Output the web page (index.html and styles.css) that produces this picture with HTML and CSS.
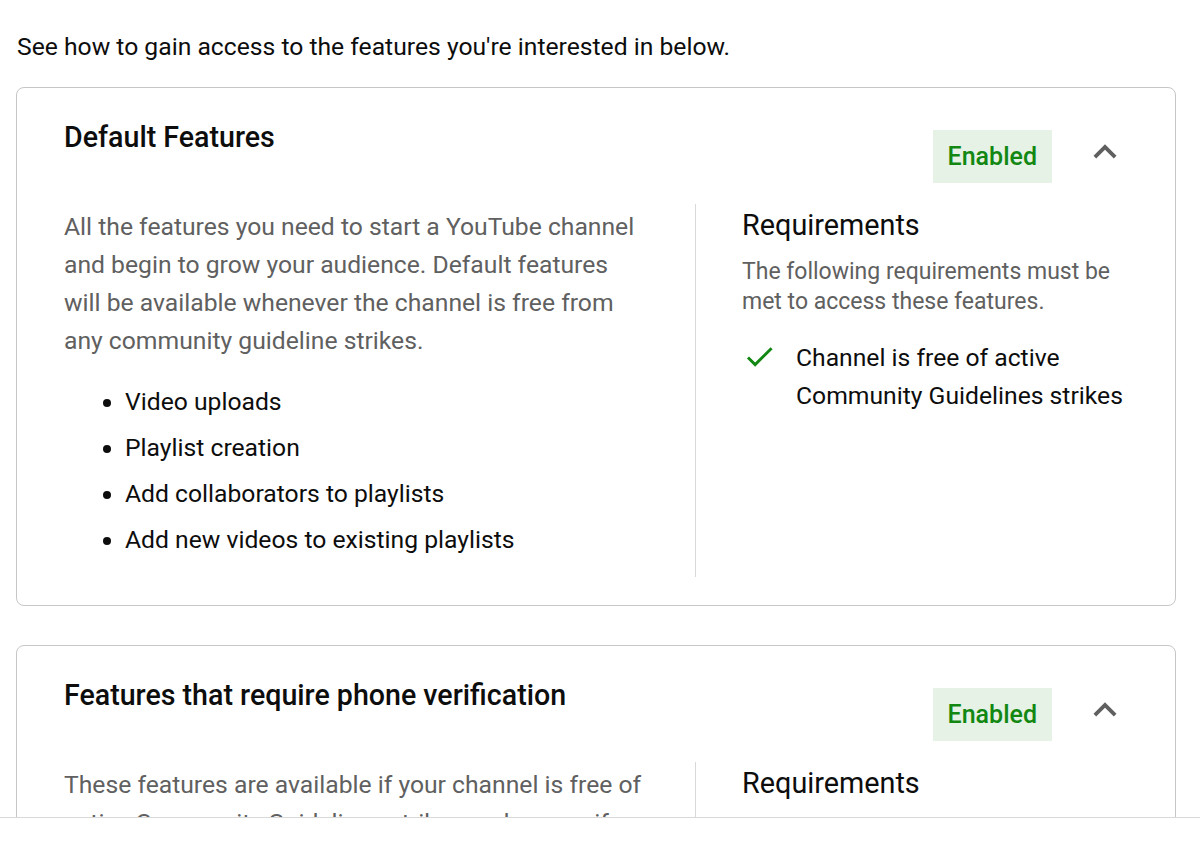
FILE: index.html
```html
<!DOCTYPE html>
<html lang="en">
<head>
  <meta charset="UTF-8" />
  <title>Feature eligibility</title>
  <link rel="stylesheet" href="styles.css">
</head>
<body>
  <div class="scroller">
    <p class="intro">See how to gain access to the features you're interested in below.</p>

    <section class="card">
      <div class="card-head">
        <h2>Default Features</h2>
        <div class="status">
          <span class="badge">Enabled</span>
          <button class="toggle" aria-label="Collapse">
            <svg viewBox="0 0 24 24" width="46" height="46"><path d="M12 8l-6 6 1.41 1.41L12 10.83l4.59 4.58L18 14z" fill="#606060"/></svg>
          </button>
        </div>
      </div>
      <div class="card-body">
        <div class="about">
          <p>All the features you need to start a YouTube channel and begin to grow your audience. Default features will be available whenever the channel is free from any community guideline strikes.</p>
          <ul>
            <li>Video uploads</li>
            <li>Playlist creation</li>
            <li>Add collaborators to playlists</li>
            <li>Add new videos to existing playlists</li>
          </ul>
        </div>
        <div class="reqs">
          <h3>Requirements</h3>
          <p class="reqs-note">The following requirements must be met to access these features.</p>
          <div class="req">
            <svg viewBox="0 0 24 24" width="35" height="35"><path d="M9 16.17L4.83 12l-1.42 1.41L9 19 21 7l-1.41-1.41z" fill="#128712"/></svg>
            <span>Channel is free of active Community Guidelines strikes</span>
          </div>
        </div>
      </div>
    </section>

    <section class="card">
      <div class="card-head">
        <h2>Features that require phone verification</h2>
        <div class="status">
          <span class="badge">Enabled</span>
          <button class="toggle" aria-label="Collapse">
            <svg viewBox="0 0 24 24" width="46" height="46"><path d="M12 8l-6 6 1.41 1.41L12 10.83l4.59 4.58L18 14z" fill="#606060"/></svg>
          </button>
        </div>
      </div>
      <div class="card-body">
        <div class="about">
          <p>These features are available if your channel is free of active Community Guidelines strikes and you verify your phone number.</p>
        </div>
        <div class="reqs">
          <h3>Requirements</h3>
          <p class="reqs-note">The following requirements must be met to access these features.</p>
        </div>
      </div>
    </section>
  </div>
</body>
</html>
```

FILE: styles.css
```css
body {
  margin: 0;
  font-family: Roboto, "Noto Sans", sans-serif;
  background-color: #fff;
  color: #0d0d0d;
}

.scroller {
  height: 818px;
  overflow: hidden;
  border-bottom: 1px solid #d9d9d9;
  padding: 0 24px 0 16px;
  box-sizing: border-box;
}

.intro {
  margin: 28px 0 21px 1px;
  font-size: 24.7px;
  line-height: 38px;
  color: #0d0d0d;
}

.card {
  border: 1px solid #c6c6c6;
  border-radius: 8px;
  padding: 31px 47px 28px 47px;
  margin-bottom: 39px;
}

.card-head {
  display: flex;
  justify-content: space-between;
  align-items: flex-start;
}

.card-head h2 {
  margin: 0;
  font-size: 28.6px;
  line-height: 36px;
  font-weight: 500;
}

.status {
  display: flex;
  align-items: center;
  gap: 30px;
  margin-top: 11px;
}

.badge {
  background-color: #e5f2e5;
  color: #128712;
  font-size: 25px;
  font-weight: 500;
  line-height: 53px;
  padding: 0 15px;
}

.toggle {
  background: none;
  border: none;
  padding: 0;
  width: 46px;
  height: 46px;
  display: flex;
  margin-top: -9px;
  cursor: pointer;
}

.card-body {
  display: grid;
  grid-template-columns: 632px 1fr;
  margin-top: 21px;
}

.about {
  border-right: 1px solid #d9d9d9;
  padding-right: 48px;
  padding-bottom: 10px;
}

.about p {
  margin: 4px 0 0;
  font-size: 24.7px;
  line-height: 38px;
  color: #606060;
}

.about ul {
  margin: 23px 0 0;
  padding-left: 61px;
}

.about li {
  font-size: 24.7px;
  line-height: 38px;
  margin-bottom: 8px;
}

.reqs {
  padding-left: 46px;
}

.reqs h3 {
  margin: 3px 0 0;
  font-size: 28.8px;
  line-height: 36px;
  font-weight: 400;
}

.reqs-note {
  margin: 14px 0 0;
  font-size: 23px;
  line-height: 30px;
  color: #606060;
}

.req {
  display: flex;
  align-items: flex-start;
  gap: 19px;
  margin-top: 22px;
  font-size: 24.7px;
  line-height: 38px;
}

.req svg {
  flex-shrink: 0;
}
```
